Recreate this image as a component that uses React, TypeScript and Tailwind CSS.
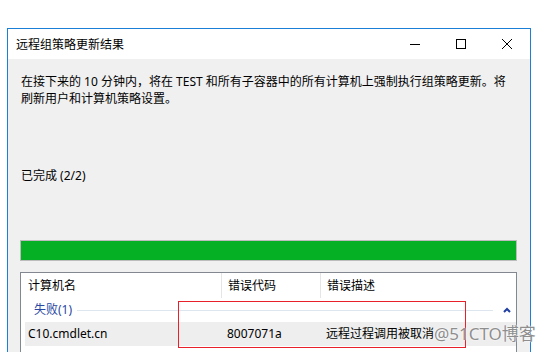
import React from "react";

const font = { fontFamily: '"Noto Sans", "Noto Sans CJK SC", sans-serif' };

export default function App() {
  return (
    <div className="relative w-[541px] h-[352px] overflow-hidden bg-white text-[12px] text-black" style={font}>
      <div className="h-[28px]" />
      <div className="ml-[7px] w-[524px] h-[324px] border-x border-t border-[#1a7fd6] flex flex-col">
        {/* title bar */}
        <div className="h-[30px] bg-white flex items-center shrink-0">
          <div className="pl-[8px] flex-1 leading-[17px] pt-[1px]">远程组策略更新结果</div>
          <div className="flex h-full">
            <div className="w-[46px] h-full flex items-center justify-center">
              <svg width="10" height="10" viewBox="0 0 10 10">
                <path d="M0 5.5 H10" stroke="#000" strokeWidth="1" />
              </svg>
            </div>
            <div className="w-[46px] h-full flex items-center justify-center">
              <svg width="10" height="10" viewBox="0 0 10 10">
                <rect x="0.5" y="0.5" width="9" height="9" fill="none" stroke="#000" strokeWidth="1" />
              </svg>
            </div>
            <div className="w-[46px] h-full flex items-center justify-center">
              <svg width="10" height="10" viewBox="0 0 10 10">
                <path d="M0 0 L10 10 M10 0 L0 10" stroke="#000" strokeWidth="1" />
              </svg>
            </div>
          </div>
        </div>
        {/* body */}
        <div className="flex-1 bg-[#f0f0f0] pl-[12px] pr-[13px] flex flex-col">
          <div className="pt-[14px] leading-[17px] pl-[1px]">
            <div className="whitespace-nowrap">在接下来的 10 分钟内，将在 TEST 和所有子容器中的所有计算机上强制执行组策略更新。将</div>
            <div className="whitespace-nowrap">刷新用户和计算机策略设置。</div>
          </div>
          <div className="mt-[60px] leading-[17px] pl-[1px]">已完成 (2/2)</div>
          <div className="mt-[56px] h-[21px] border border-[#bcbcbc] bg-[#e6e6e6]">
            <div className="h-full w-full bg-[#06b025]" />
          </div>
          <div className="mt-[11px] flex-1 border border-[#828790] bg-white flex flex-col">
            {/* header */}
            <div className="h-[25px] grid grid-cols-[200px_99px_1fr] items-stretch shrink-0">
              <div className="pl-[7px] flex items-center">计算机名</div>
              <div className="pl-[6px] flex items-center border-l border-[#e5e5e5]">错误代码</div>
              <div className="pl-[6px] flex items-center border-l border-[#e5e5e5]">错误描述</div>
            </div>
            {/* group */}
            <div className="h-[24px] flex items-center shrink-0 pl-[13px] pr-[5px]">
              <span className="text-[#2846a4]">失败(1)</span>
              <div className="flex-1 h-px bg-[#dde5ee] ml-[5px] mr-[10px]" />
              <svg width="8" height="6" viewBox="0 0 8 6">
                <path d="M1 5 L4 2 L7 5" fill="none" stroke="#1f3fa3" strokeWidth="2" />
              </svg>
            </div>
            {/* data row */}
            <div className="h-[24px] ml-[4px] bg-[#eeeeee] grid grid-cols-[196px_99px_1fr] items-center shrink-0">
              <div className="pl-[3px]">C10.cmdlet.cn</div>
              <div className="pl-[6px]">8007071a</div>
              <div className="pl-[6px] whitespace-nowrap">远程过程调用被取消</div>
            </div>
            <div className="h-[24px] flex items-center shrink-0 pl-[13px] pt-[12px]">
              <span className="text-[#2846a4]">成功(1)</span>
            </div>
          </div>
        </div>
      </div>
      {/* annotation overlay */}
      <div className="absolute left-[178px] top-[301px] w-[288px] h-[47px] border border-[#e8202a]" />
      <div
        className="absolute left-[434px] top-[323px] text-[17px] leading-[22px] text-[#8e8e8e] whitespace-nowrap"
        style={{ textShadow: "0 0 1px #fff, 0 0 2px #fff" }}
      >
        @51CTO博客
      </div>
    </div>
  );
}
